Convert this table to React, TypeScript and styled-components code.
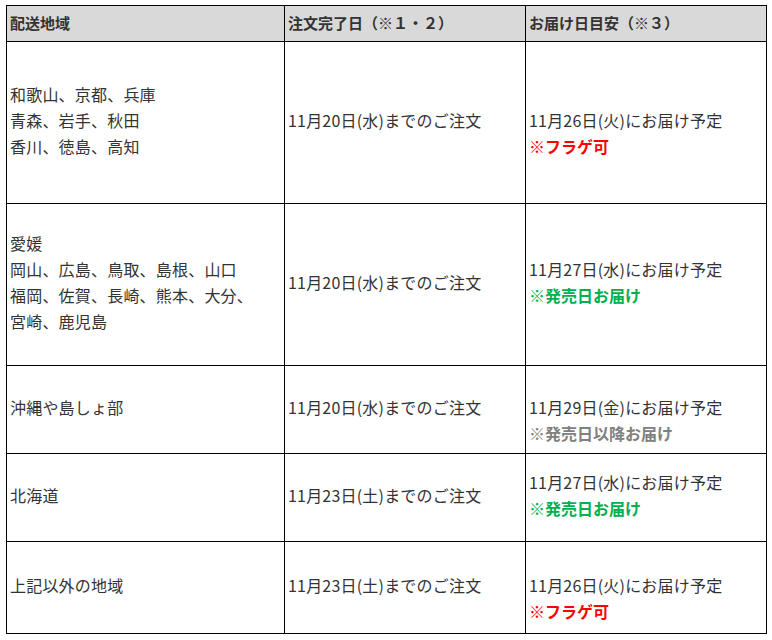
import styled, { createGlobalStyle } from 'styled-components';

type Note = { text: string; tone: 'red' | 'green' | 'grey' };

type Area = {
  regions: string[];
  deadline: string;
  delivery: string;
  note: Note;
  lead: boolean;
  height: number;
};

const areas: Area[] = [
  {
    regions: ['和歌山、京都、兵庫', '青森、岩手、秋田', '香川、徳島、高知'],
    deadline: '11月20日(水)までのご注文',
    delivery: '11月26日(火)にお届け予定',
    note: { text: '※フラゲ可', tone: 'red' },
    lead: true,
    height: 162,
  },
  {
    regions: ['愛媛', '岡山、広島、鳥取、島根、山口', '福岡、佐賀、長崎、熊本、大分、', '宮崎、鹿児島'],
    deadline: '11月20日(水)までのご注文',
    delivery: '11月27日(水)にお届け予定',
    note: { text: '※発売日お届け', tone: 'green' },
    lead: false,
    height: 162,
  },
  {
    regions: ['沖縄や島しょ部'],
    deadline: '11月20日(水)までのご注文',
    delivery: '11月29日(金)にお届け予定',
    note: { text: '※発売日以降お届け', tone: 'grey' },
    lead: true,
    height: 88,
  },
  {
    regions: ['北海道'],
    deadline: '11月23日(土)までのご注文',
    delivery: '11月27日(水)にお届け予定',
    note: { text: '※発売日お届け', tone: 'green' },
    lead: false,
    height: 88,
  },
  {
    regions: ['上記以外の地域'],
    deadline: '11月23日(土)までのご注文',
    delivery: '11月26日(火)にお届け予定',
    note: { text: '※フラゲ可', tone: 'red' },
    lead: true,
    height: 92,
  },
];

const toneColor = {
  red: '#ff0000',
  green: '#00b050',
  grey: '#808080',
};

const GlobalStyle = createGlobalStyle`
  body {
    margin: 0;
    background: #ffffff;
    font-family: 'Noto Sans CJK JP', 'Noto Sans', sans-serif;
  }
`;

const Page = styled.div`
  padding: 5px 6px;
`;

const Table = styled.table`
  border-collapse: collapse;
  table-layout: fixed;
  width: 760px;
  color: #333333;
`;

const HeadCell = styled.th<{ $width: number }>`
  width: ${(p) => p.$width}px;
  height: 36px;
  padding: 0 4px 2px 3px;
  box-sizing: border-box;
  background: #d9d9d9;
  border: 1px solid #000000;
  text-align: left;
  vertical-align: middle;
  font-size: 15px;
  font-weight: 700;
  line-height: 22px;
`;

const Cell = styled.td<{ $height: number }>`
  height: ${(p) => p.$height}px;
  padding: 0 4px 5px 3px;
  box-sizing: border-box;
  border: 1px solid #000000;
  vertical-align: middle;
  font-size: 16px;
  line-height: 26px;
`;

const Line = styled.div`
  white-space: nowrap;
  letter-spacing: 0.2px;
`;

const Delivery = styled.div<{ $lead: boolean }>`
  padding-top: ${(p) => (p.$lead ? '26px' : '0')};
`;

const Remark = styled.div<{ $tone: Note['tone'] }>`
  color: ${(p) => toneColor[p.$tone]};
  font-weight: 700;
  white-space: nowrap;
`;

export default function App() {
  return (
    <Page>
      <GlobalStyle />
      <Table>
        <thead>
          <tr>
            <HeadCell $width={278}>配送地域</HeadCell>
            <HeadCell $width={241}>注文完了日（※１・２）</HeadCell>
            <HeadCell $width={241}>お届け日目安（※３）</HeadCell>
          </tr>
        </thead>
        <tbody>
          {areas.map((area) => (
            <tr key={area.regions[0]}>
              <Cell $height={area.height}>
                {area.regions.map((r) => (
                  <Line key={r}>{r}</Line>
                ))}
              </Cell>
              <Cell $height={area.height}>
                <Line>{area.deadline}</Line>
              </Cell>
              <Cell $height={area.height}>
                <Delivery $lead={area.lead}>
                  <Line>{area.delivery}</Line>
                  <Remark $tone={area.note.tone}>{area.note.text}</Remark>
                </Delivery>
              </Cell>
            </tr>
          ))}
        </tbody>
      </Table>
    </Page>
  );
}
